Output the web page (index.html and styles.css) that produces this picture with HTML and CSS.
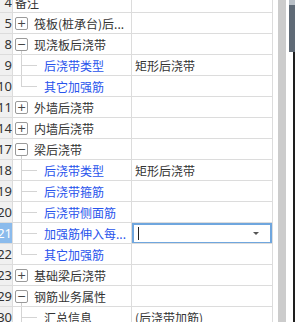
FILE: index.html
```html
<!DOCTYPE html>
<html lang="zh-CN">
<head>
    <meta charset="UTF-8">
    <title>属性编辑</title>
    <link rel="stylesheet" href="styles.css">
</head>
<body>
    <div class="frame">
        <div class="sheet">
            <div class="row">
                <div class="num">4</div>
                <div class="name"><span class="label">备注</span></div>
                <div class="value"></div>
            </div>
            <div class="row">
                <div class="num">5</div>
                <div class="name"><span class="box">+</span><span class="label">筏板(桩承台)后...</span></div>
                <div class="value"></div>
            </div>
            <div class="row">
                <div class="num">8</div>
                <div class="name open"><span class="box">−</span><span class="label">现浇板后浇带</span></div>
                <div class="value"></div>
            </div>
            <div class="row">
                <div class="num">9</div>
                <div class="name"><span class="twig"></span><span class="label child">后浇带类型</span></div>
                <div class="value">矩形后浇带</div>
            </div>
            <div class="row">
                <div class="num">10</div>
                <div class="name"><span class="twig last"></span><span class="label child">其它加强筋</span></div>
                <div class="value"></div>
            </div>
            <div class="row">
                <div class="num">11</div>
                <div class="name"><span class="box">+</span><span class="label">外墙后浇带</span></div>
                <div class="value"></div>
            </div>
            <div class="row">
                <div class="num">14</div>
                <div class="name"><span class="box">+</span><span class="label">内墙后浇带</span></div>
                <div class="value"></div>
            </div>
            <div class="row">
                <div class="num">17</div>
                <div class="name open"><span class="box">−</span><span class="label">梁后浇带</span></div>
                <div class="value"></div>
            </div>
            <div class="row">
                <div class="num">18</div>
                <div class="name"><span class="twig"></span><span class="label child">后浇带类型</span></div>
                <div class="value">矩形后浇带</div>
            </div>
            <div class="row">
                <div class="num">19</div>
                <div class="name"><span class="twig"></span><span class="label child">后浇带箍筋</span></div>
                <div class="value"></div>
            </div>
            <div class="row">
                <div class="num">20</div>
                <div class="name"><span class="twig"></span><span class="label child">后浇带侧面筋</span></div>
                <div class="value"></div>
            </div>
            <div class="row current">
                <div class="num">21</div>
                <div class="name"><span class="twig"></span><span class="label child">加强筋伸入每...</span></div>
                <div class="value">
                    <div class="editor"><span class="caret"></span><span class="drop"></span></div>
                </div>
            </div>
            <div class="row">
                <div class="num">22</div>
                <div class="name"><span class="twig last"></span><span class="label child">其它加强筋</span></div>
                <div class="value"></div>
            </div>
            <div class="row">
                <div class="num">23</div>
                <div class="name"><span class="box">+</span><span class="label">基础梁后浇带</span></div>
                <div class="value"></div>
            </div>
            <div class="row">
                <div class="num">29</div>
                <div class="name open"><span class="box">−</span><span class="label">钢筋业务属性</span></div>
                <div class="value"></div>
            </div>
            <div class="row">
                <div class="num">30</div>
                <div class="name"><span class="twig"></span><span class="label">汇总信息</span></div>
                <div class="value">(后浇带加筋)</div>
            </div>
        </div>

        <div class="gutter"></div>
        <div class="track"></div>
        <div class="gutter narrow"></div>
        <div class="edge">
            <div class="edge-top"></div>
            <div class="edge-rest"></div>
        </div>
    </div>
</body>
</html>
```

FILE: styles.css
```css
:root {
    --grid-line: #dcdcdc;
    --text-color: #333;
    --child-color: #2853ec;
    --select-color: #6fa6de;
}

body {
    margin: 0;
    background-color: #fff;
    font-family: "Noto Sans CJK SC", "Noto Sans", sans-serif;
    font-size: 12px;
    color: var(--text-color);
    overflow: hidden;
}

.frame {
    display: flex;
    height: 322px;
    overflow: hidden;
}

.sheet {
    width: 273px;
    margin-top: -8px;
    display: flex;
    flex-direction: column;
}

.row {
    display: grid;
    grid-template-columns: 13px 119px 141px;
    height: 21px;
    flex-shrink: 0;
}

.row > div {
    box-sizing: border-box;
    border-right: 1px solid var(--grid-line);
    border-bottom: 1px solid var(--grid-line);
    display: flex;
    align-items: center;
    overflow: hidden;
    white-space: nowrap;
}

/* row numbers are wider than the column, so the left digit gets clipped */
.num {
    background-color: #f0f0f0;
    justify-content: flex-end;
    padding-right: 0;
    font-family: "Noto Sans", sans-serif;
    font-size: 13px;
    color: #333;
}

.current .num {
    background-color: #8bbbec;
    color: #fff;
}

.name {
    padding-left: 2px;
}

.name.open {
    background: linear-gradient(#cfcfcf, #cfcfcf) no-repeat 8px 17px / 1px 4px;
}

.box {
    box-sizing: border-box;
    width: 13px;
    height: 13px;
    border: 1px solid #9a9a9a;
    border-radius: 2px;
    display: flex;
    align-items: center;
    justify-content: center;
    font-family: "DejaVu Sans", sans-serif;
    font-size: 11px;
    line-height: 1;
    color: #444;
    margin-right: 6px;
    flex-shrink: 0;
}

.twig {
    align-self: stretch;
    width: 16px;
    margin-left: 6px;
    margin-right: 7px;
    flex-shrink: 0;
    background:
        linear-gradient(#d4d4d4, #d4d4d4) no-repeat 0 0 / 1px 100%,
        linear-gradient(#d4d4d4, #d4d4d4) no-repeat 0 10px / 100% 1px;
}

.twig.last {
    background:
        linear-gradient(#d4d4d4, #d4d4d4) no-repeat 0 0 / 1px 11px,
        linear-gradient(#d4d4d4, #d4d4d4) no-repeat 0 10px / 100% 1px;
}

.label.child {
    color: var(--child-color);
}

.value {
    padding-left: 3px;
}

.current .value {
    padding: 0;
}

.editor {
    box-sizing: border-box;
    width: 140px;
    height: 21px;
    margin-top: 1px;
    border: 2px solid var(--select-color);
    display: flex;
    align-items: center;
    justify-content: space-between;
    padding: 0 11px 0 4px;
}

.caret {
    width: 1px;
    height: 13px;
    background-color: #222;
}

.drop {
    width: 0;
    height: 0;
    border-left: 3px solid transparent;
    border-right: 3px solid transparent;
    border-top: 3px solid #555;
}

.gutter {
    width: 5px;
}

.gutter.narrow {
    width: 3px;
}

.track {
    width: 8px;
    background-color: #cccccc;
}

.edge {
    width: 6px;
    display: flex;
    flex-direction: column;
}

.edge-top {
    height: 52px;
    background-color: #5f6a76;
    border-top: 5px solid #b9c0c7;
    box-sizing: border-box;
}

.edge-rest {
    flex: 1;
    border-right: 2px solid #1e1e1e;
}
```
